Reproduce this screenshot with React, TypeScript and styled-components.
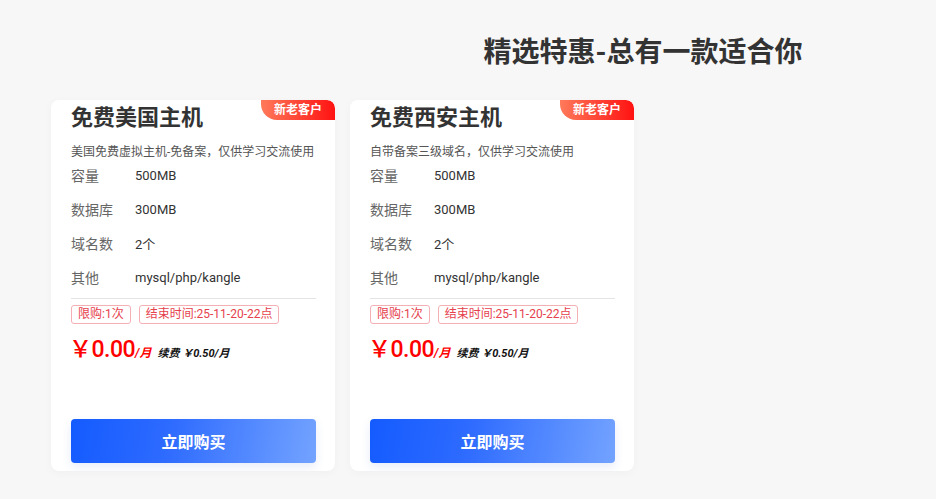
import styled, { createGlobalStyle } from "styled-components";

const GlobalStyle = createGlobalStyle`
  html, body {
    margin: 0;
    padding: 0;
    background: #f7f7f7;
    font-family: Roboto, "Noto Sans CJK SC", sans-serif;
  }
`;

type Plan = {
  name: string;
  desc: string;
  specs: { label: string; value: string }[];
};

const plans: Plan[] = [
  {
    name: "免费美国主机",
    desc: "美国免费虚拟主机-免备案，仅供学习交流使用",
    specs: [
      { label: "容量", value: "500MB" },
      { label: "数据库", value: "300MB" },
      { label: "域名数", value: "2个" },
      { label: "其他", value: "mysql/php/kangle" },
    ],
  },
  {
    name: "免费西安主机",
    desc: "自带备案三级域名，仅供学习交流使用",
    specs: [
      { label: "容量", value: "500MB" },
      { label: "数据库", value: "300MB" },
      { label: "域名数", value: "2个" },
      { label: "其他", value: "mysql/php/kangle" },
    ],
  },
];

export default function App() {
  return (
    <>
      <GlobalStyle />
      <Page>
        <Heading>精选特惠-总有一款适合你</Heading>
        <CardRow>
          {plans.map((p) => (
            <Card key={p.name}>
              <Badge>新老客户</Badge>
              <CardTitle>{p.name}</CardTitle>
              <Desc>{p.desc}</Desc>
              <Specs>
                {p.specs.map((s) => (
                  <SpecRow key={s.label}>
                    <SpecLabel>{s.label}</SpecLabel>
                    <SpecValue>{s.value}</SpecValue>
                  </SpecRow>
                ))}
              </Specs>
              <Divider />
              <Tags>
                <Tag>限购:1次</Tag>
                <Tag>结束时间:25-11-20-22点</Tag>
              </Tags>
              <PriceRow>
                <Price>￥0.00</Price>
                <Unit>/月</Unit>
                <Renew>续费 ￥0.50/月</Renew>
              </PriceRow>
              <BuyButton>立即购买</BuyButton>
            </Card>
          ))}
        </CardRow>
      </Page>
    </>
  );
}

const Page = styled.div`
  padding: 33px 0 0 51px;
  min-height: 499px;
  box-sizing: border-box;
`;

const Heading = styled.h1`
  margin: 0;
  padding-left: 299px;
  text-align: center;
  font-size: 28px;
  line-height: 40px;
  font-weight: 700;
  color: #333;
`;

const CardRow = styled.div`
  display: flex;
  gap: 15px;
  margin-top: 27px;
`;

const Card = styled.div`
  position: relative;
  width: 284px;
  height: 371px;
  box-sizing: border-box;
  padding: 0 19px 8px 20px;
  background: #fff;
  border-radius: 8px;
  overflow: hidden;
  box-shadow: 0 2px 10px rgba(0, 0, 0, 0.03);
  display: flex;
  flex-direction: column;
`;

const Badge = styled.div`
  position: absolute;
  top: 0;
  right: 0;
  width: 74px;
  height: 20px;
  background: linear-gradient(90deg, #ff7a5a, #ff1212);
  border-radius: 0 8px 0 16px;
  color: #fff;
  font-size: 12px;
  font-weight: 700;
  line-height: 20px;
  text-align: center;
`;

const CardTitle = styled.div`
  font-size: 22px;
  font-weight: 700;
  line-height: 36px;
  color: #333;
`;

const Desc = styled.div`
  margin-top: 7px;
  font-size: 12px;
  line-height: 18px;
  color: #555;
`;

const Specs = styled.div`
  margin-top: -3px;
  display: flex;
  flex-direction: column;
`;

const SpecRow = styled.div`
  display: flex;
  align-items: center;
  height: 34px;
`;

const SpecLabel = styled.span`
  width: 64px;
  font-size: 14px;
  color: #666;
`;

const SpecValue = styled.span`
  font-size: 13px;
  color: #333;
`;

const Divider = styled.div`
  margin-top: 4px;
  height: 1px;
  background: #e4e4e4;
`;

const Tags = styled.div`
  display: flex;
  gap: 8px;
  margin-top: 6px;
`;

const Tag = styled.span`
  height: 19px;
  box-sizing: border-box;
  padding: 0 6px;
  border: 1px solid #f5b0b5;
  border-radius: 3px;
  font-size: 12px;
  line-height: 17px;
  color: #e6414d;
`;

const PriceRow = styled.div`
  display: flex;
  align-items: baseline;
  margin-top: 11px;
  height: 30px;
  line-height: 30px;
`;

const Price = styled.span`
  margin-left: -2px;
  font-size: 23px;
  font-weight: 500;
  letter-spacing: -0.5px;
  color: #ff0000;
`;

const Unit = styled.span`
  font-size: 12px;
  font-style: italic;
  font-weight: 700;
  color: #ff0000;
`;

const Renew = styled.span`
  margin-left: 6px;
  font-size: 11px;
  font-style: italic;
  font-weight: 700;
  color: #111;
`;

const BuyButton = styled.button`
  margin-top: auto;
  height: 44px;
  width: 100%;
  border: none;
  border-radius: 4px;
  background: linear-gradient(100deg, #145bff 0%, #2e6bff 40%, #73a3ff 100%);
  box-shadow: 0 4px 10px rgba(60, 100, 200, 0.12);
  color: #fff;
  font-family: inherit;
  font-size: 16px;
  font-weight: 700;
  cursor: pointer;
`;
